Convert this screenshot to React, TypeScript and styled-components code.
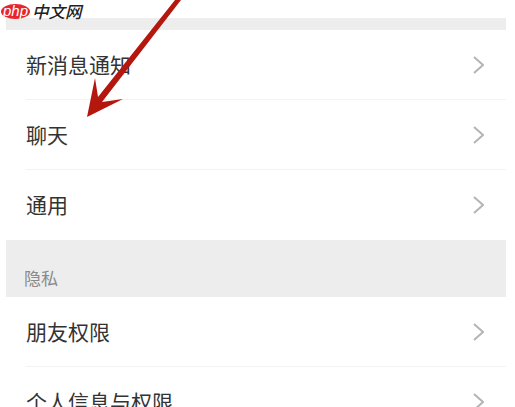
import React from 'react';
import styled, { createGlobalStyle } from 'styled-components';

const GlobalStyle = createGlobalStyle`
  html, body {
    margin: 0;
    padding: 0;
    background: #ffffff;
    overflow: hidden;
  }
`;

const Page = styled.div`
  position: relative;
  width: 515px;
  height: 407px;
  overflow: hidden;
  background: #ffffff;
  padding: 18px 9px 0 6px;
  box-sizing: border-box;
  font-family: "Noto Sans CJK SC", "Liberation Sans", sans-serif;
`;

const TopBand = styled.div`
  height: 12px;
  background: #ededed;
`;

const SectionLabel = styled.div`
  height: 57px;
  box-sizing: border-box;
  background: #ededed;
  padding: 26px 0 0 18px;
  font-size: 17px;
  line-height: 24px;
  color: #8a8a8a;
`;

const Group = styled.div`
  background: #ffffff;
`;

const Row = styled.div`
  height: 70px;
  box-sizing: border-box;
  margin-left: 20px;
  padding: 0 22px 2px 0;
  display: flex;
  align-items: center;
  justify-content: space-between;
  border-bottom: 1px solid #f3f3f3;

  &:last-child {
    border-bottom: none;
  }
`;

const RowLabel = styled.span`
  font-size: 21px;
  line-height: 30px;
  color: #333333;
`;

const Chevron = styled.svg`
  width: 12px;
  height: 20px;
  flex: none;
  margin-top: 2px;
`;

const Logo = styled.div`
  position: absolute;
  left: 1px;
  top: 0;
  display: flex;
  align-items: center;
  gap: 2px;
`;

const LogoBadge = styled.div`
  width: 29px;
  height: 15px;
  border-radius: 50%;
  background: #e8262d;
  color: #ffffff;
  font-family: "Liberation Sans", sans-serif;
  font-style: italic;
  font-size: 15px;
  line-height: 13px;
  text-align: center;
`;

const LogoText = styled.span`
  font-size: 16.5px;
  line-height: 22px;
  font-style: italic;
  font-weight: 500;
  color: #222222;
`;

const Arrow = styled.svg`
  position: absolute;
  left: 0;
  top: 0;
  width: 515px;
  height: 407px;
  pointer-events: none;
`;

const RowChevron: React.FC = () => (
  <Chevron viewBox="0 0 12 20">
    <path d="M2 2 L11 10 L2 18" fill="none" stroke="#b4b4b4" strokeWidth="2" />
  </Chevron>
);

const notifyRows = ['新消息通知', '聊天', '通用'];
const privacyRows = ['朋友权限', '个人信息与权限'];

const App: React.FC = () => {
  return (
    <Page>
      <GlobalStyle />
      <TopBand />
      <Group>
        {notifyRows.map((label) => (
          <Row key={label}>
            <RowLabel>{label}</RowLabel>
            <RowChevron />
          </Row>
        ))}
      </Group>
      <SectionLabel>隐私</SectionLabel>
      <Group>
        {privacyRows.map((label) => (
          <Row key={label}>
            <RowLabel>{label}</RowLabel>
            <RowChevron />
          </Row>
        ))}
      </Group>

      <Arrow viewBox="0 0 515 407">
        <path
          d="M175 0 L181 0 L102 102 L123 99 L87 117 L95 78 L98 97 Z"
          fill="#b3170e"
        />
      </Arrow>

      <Logo>
        <LogoBadge>php</LogoBadge>
        <LogoText>中文网</LogoText>
      </Logo>
    </Page>
  );
};

export default App;
